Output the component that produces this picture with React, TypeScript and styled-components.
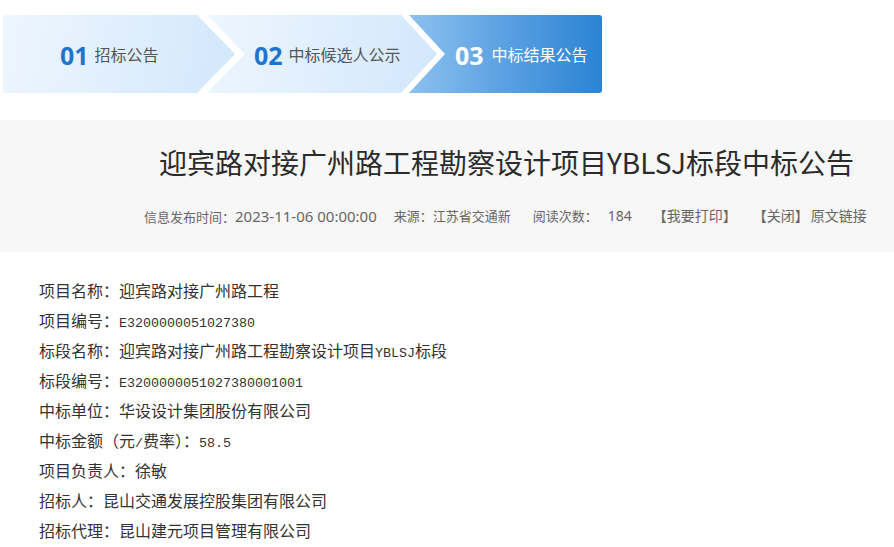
import React from "react";
import styled, { createGlobalStyle } from "styled-components";

const Global = createGlobalStyle`
  html, body { margin: 0; padding: 0; background: #fff; }
  body { font-family: "Noto Sans CJK SC", "Noto Sans", sans-serif; }
`;

const Page = styled.div`
  width: 894px;
  height: 547px;
  overflow: hidden;
  background: #fff;
`;

const Steps = styled.div`
  display: flex;
  height: 78px;
  padding: 15px 0 0 3px;
`;

type StepKind = "first" | "middle" | "last";

const Step = styled.div<{ $kind: StepKind; $active?: boolean; $w: number; $pl: number }>`
  width: ${(p) => p.$w}px;
  height: 78px;
  flex: none;
  box-sizing: border-box;
  padding-left: ${(p) => p.$pl}px;
  display: flex;
  align-items: center;
  margin-left: ${(p) => (p.$kind === "first" ? 0 : -28)}px;
  background: ${(p) =>
    p.$active
      ? "linear-gradient(90deg, #8dc1ef 0%, #5fa3e3 45%, #2b83d3 100%)"
      : "linear-gradient(100deg, #eef6fe 0%, #d2e7fc 100%)"};
  border-radius: ${(p) => (p.$kind === "last" ? "0 3px 3px 0" : "0")};
  clip-path: ${(p) =>
    p.$kind === "first"
      ? "polygon(0 0, calc(100% - 38px) 0, 100% 50%, calc(100% - 38px) 100%, 0 100%)"
      : p.$kind === "middle"
      ? "polygon(0 0, calc(100% - 36px) 0, 100% 50%, calc(100% - 36px) 100%, 0 100%, 38px 50%)"
      : "polygon(0 0, 100% 0, 100% 100%, 0 100%, 36px 50%)"};
  color: ${(p) => (p.$active ? "#fff" : "#555")};
`;

const StepNum = styled.span<{ $active?: boolean }>`
  font-family: "Open Sans", "Noto Sans", sans-serif;
  font-weight: 700;
  font-size: 25px;
  line-height: 1;
  color: ${(p) => (p.$active ? "#fff" : "#1d75cf")};
  margin-right: ${(p) => (p.$active ? 8 : 6)}px;
  position: relative;
  top: 1px;
`;

const StepLabel = styled.span`
  font-size: 16px;
  line-height: 1;
`;

const Banner = styled.div`
  margin-top: 27px;
  height: 132px;
  background: #f7f7f7;
  box-sizing: border-box;
  padding-top: 22px;
`;

const Title = styled.h1`
  margin: 0;
  padding-left: 159px;
  font-size: 28px;
  font-weight: 400;
  line-height: 40px;
  color: #2b2b2b;
  white-space: nowrap;
`;

const Meta = styled.div`
  display: flex;
  align-items: center;
  padding-left: 144px;
  margin-top: 24px;
  font-family: "Noto Sans", "Noto Sans CJK SC", sans-serif;
  font-size: 13px;
  line-height: 20px;
  height: 20px;
  color: #666;
  white-space: nowrap;
`;

const MetaItem = styled.span<{ $ml?: number; $size?: number }>`
  margin-left: ${(p) => p.$ml ?? 0}px;
  font-size: ${(p) => p.$size ?? 13}px;
`;

const MetaNum = styled.span<{ $size: number }>`
  font-size: ${(p) => p.$size}px;
`;

const Content = styled.div`
  padding: 23px 0 0 39px;
`;

const Line = styled.div`
  height: 30px;
  font-size: 16px;
  line-height: 30px;
  color: #333;
  white-space: nowrap;
`;

const Latin = styled.span`
  font-family: "Liberation Mono", monospace;
  font-size: 13.33px;
  line-height: 1;
`;

const rows: [string, React.ReactNode][] = [
  ["项目名称：", "迎宾路对接广州路工程"],
  ["项目编号：", <Latin>E3200000051027380</Latin>],
  ["标段名称：", <>迎宾路对接广州路工程勘察设计项目<Latin>YBLSJ</Latin>标段</>],
  ["标段编号：", <Latin>E3200000051027380001001</Latin>],
  ["中标单位：", "华设设计集团股份有限公司"],
  ["中标金额（元", <><Latin>/</Latin>费率）：<Latin>58.5</Latin></>],
  ["项目负责人：", "徐敏"],
  ["招标人：", "昆山交通发展控股集团有限公司"],
  ["招标代理：", "昆山建元项目管理有限公司"],
];

export default function App() {
  return (
    <Page>
      <Global />
      <Steps>
        <Step $kind="first" $w={232} $pl={57}>
          <StepNum>01</StepNum>
          <StepLabel>招标公告</StepLabel>
        </Step>
        <Step $kind="middle" $w={230} $pl={47}>
          <StepNum>02</StepNum>
          <StepLabel>中标候选人公示</StepLabel>
        </Step>
        <Step $kind="last" $active $w={193} $pl={46}>
          <StepNum $active>03</StepNum>
          <StepLabel>中标结果公告</StepLabel>
        </Step>
      </Steps>
      <Banner>
        <Title>迎宾路对接广州路工程勘察设计项目YBLSJ标段中标公告</Title>
        <Meta>
          <MetaItem>
            信息发布时间：<MetaNum $size={15}>2023-11-06 00:00:00</MetaNum>
          </MetaItem>
          <MetaItem $ml={17}>来源：江苏省交通新</MetaItem>
          <MetaItem $ml={22}>阅读次数：</MetaItem>
          <MetaItem $ml={10}>
            <MetaNum $size={14}>184</MetaNum>
          </MetaItem>
          <MetaItem $ml={21} $size={14}>【我要打印】</MetaItem>
          <MetaItem $ml={16} $size={14}>【关闭】</MetaItem>
          <MetaItem $ml={2} $size={14}>原文链接</MetaItem>
        </Meta>
      </Banner>
      <Content>
        {rows.map(([k, v], i) => (
          <Line key={i}>
            {k}
            {v}
          </Line>
        ))}
      </Content>
    </Page>
  );
}
